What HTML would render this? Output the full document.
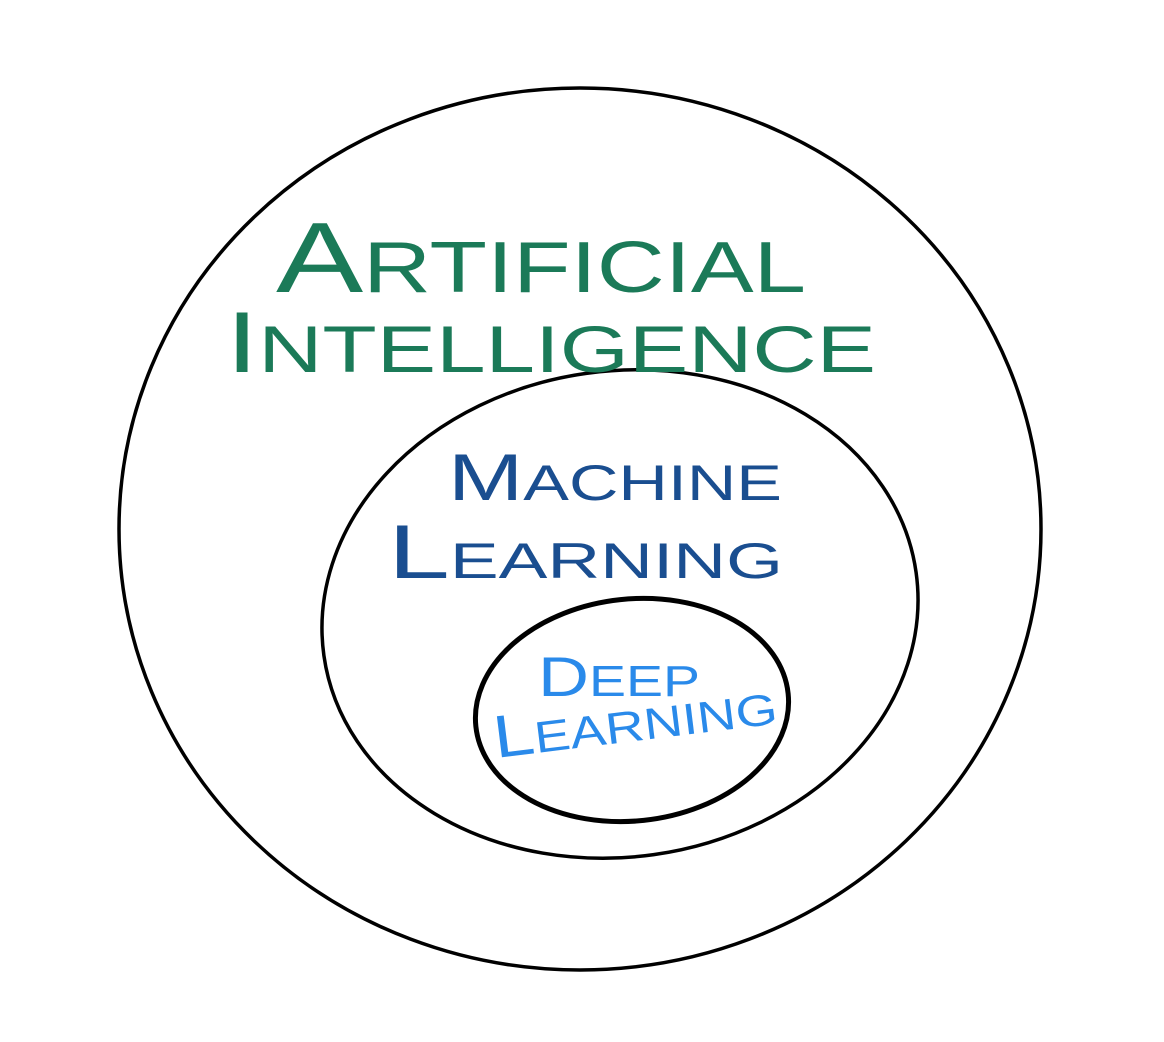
<!DOCTYPE html>
<html><head><meta charset="utf-8"><style>html,body{margin:0;padding:0;background:#fff;width:1164px;height:1042px;overflow:hidden}</style></head>
<body>
<svg width="1164" height="1042" viewBox="0 0 1164 1042" xmlns="http://www.w3.org/2000/svg" font-family="Liberation Sans, sans-serif">
<ellipse cx="580" cy="529" rx="461" ry="441" fill="none" stroke="#000" stroke-width="3.5"/>
<ellipse cx="620" cy="614" rx="299" ry="243" fill="none" stroke="#000" stroke-width="3.5" transform="rotate(-8 620 614)"/>
<ellipse cx="632" cy="710" rx="157" ry="111" fill="none" stroke="#000" stroke-width="5" transform="rotate(-6 632 710)"/>
<g fill="#1b7a58" font-weight="normal">
<text x="276" y="292" font-size="100" textLength="530" lengthAdjust="spacingAndGlyphs">A<tspan font-size="72">RTIFICIAL</tspan></text>
<text x="226" y="372" font-size="86" textLength="650" lengthAdjust="spacingAndGlyphs">I<tspan font-size="66">NTELLIGENCE</tspan></text>
</g>
<g fill="#1a4e90">
<text x="448" y="500" font-size="66" textLength="334" lengthAdjust="spacingAndGlyphs">M<tspan font-size="50">ACHINE</tspan></text>
<text x="388" y="578" font-size="76" textLength="395" lengthAdjust="spacingAndGlyphs">L<tspan font-size="50">EARNING</tspan></text>
</g>
<g fill="#2a8aea">
<text x="538" y="696" font-size="56" textLength="162" lengthAdjust="spacingAndGlyphs">D<tspan font-size="44">EEP</tspan></text>
<text x="496" y="758" font-size="60" textLength="285" lengthAdjust="spacingAndGlyphs" transform="rotate(-7 496 758)">L<tspan font-size="44">EARNING</tspan></text>
</g>
</svg>
</body></html>
